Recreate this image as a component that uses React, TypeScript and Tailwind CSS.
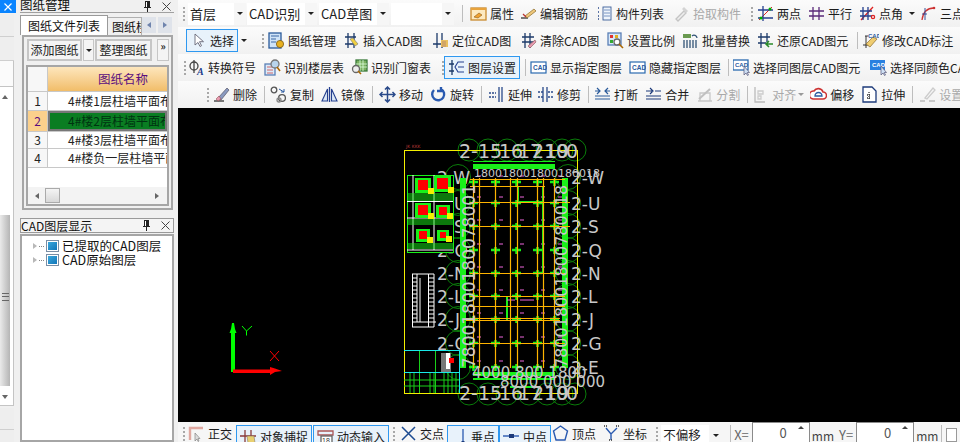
import React from "react";

const F = "font-['Noto_Sans_CJK_SC','Liberation_Sans',sans-serif]";
const S = (p: { children: React.ReactNode }) => (
  <svg width="17" height="17" viewBox="0 0 17 17" fill="none" strokeWidth="1.3" className="shrink-0">{p.children}</svg>
);
const navy = "#25408f";
const I: Record<string, React.ReactNode> = {
  props: <><rect x="1" y="3" width="15" height="12" fill="#fde9c0" stroke="#c98a2e" /><path d="M1 3h15v2H1z" fill="#e8a33c" /><path d="M4 12l5-4 3 2-4 3z" fill="#f0a030" stroke="#8a5a1a" strokeWidth=".6" /></>,
  edit: <><path d="M1 13h7" stroke="#333" /><path d="M5 11l9-7 2 2-9 7z" fill="#eec77a" stroke="#8a6a2a" strokeWidth=".7" /><path d="M3 9l3 3" stroke="#b33" /></>,
  list: <><path d="M2 3h2M2 7h2M2 11h2M2 14h2" stroke="#2a4a8a" strokeDasharray="1 1" /><rect x="7" y="2" width="8" height="13" fill="#eef4fb" stroke="#3c5f9a" strokeWidth=".9" /><path d="M8 5h6M8 8h6M8 11h6" stroke="#5a7fb5" strokeWidth=".8" /></>,
  pick: <><path d="M3 14l8-8 2 2-8 8z" fill="#eee" stroke="#c4c4c4" /><path d="M11 2l4 4-2 2-4-4z" fill="#d4d4d4" /></>,
  two: <><path d="M2 15L15 2" stroke="#d22" strokeWidth="1" /><path d="M1 5h15M1 13h15M6 1v15" stroke={navy} /><circle cx="4" cy="13" r="1.5" fill="#0a0" /><circle cx="13" cy="4" r="1.5" fill="#0a0" /></>,
  para: <path d="M1 6h15M1 11h15M5 2v13M11 2v13" stroke="#5a2a7a" />,
  angle: <><path d="M2 15L14 2" stroke="#d22" /><path d="M1 6h12M1 11h12M4 2v13M9 2v13" stroke={navy} /><circle cx="14" cy="12" r="1.6" stroke="#d22" /></>,
  three: <><path d="M2 15C3 7 7 3 14 3" stroke="#c33" /><path d="M2 9h5M5 3v12" stroke={navy} strokeWidth=".9" /><circle cx="14" cy="3" r="1.3" fill="#c33" /></>,
  sel: <path d="M5 2v11l3-2.500 2 4 1.500-.8-2-4h4z" fill="#fff" stroke="#667" strokeWidth=".9" />,
  paper: <><rect x="1" y="1" width="12" height="15" fill="#cfe3f7" stroke="#2a5a9a" /><path d="M3 4h8M3 7h5M3 10h5" stroke="#2a5a9a" strokeWidth=".9" /><circle cx="12" cy="12" r="3.6" fill="#e8b020" stroke="#7a5a10" strokeWidth=".8" /></>,
  ins: <><path d="M2 5h11M2 12h11M5 1v15M11 1v15" stroke="#1c3a6a" /><path d="M7 7l5 7 3-2-5-6z" fill="#efd040" stroke="#777" strokeWidth=".6" /></>,
  loc: <><path d="M1 12h11M5 1v15M10 1v15" stroke="#1c3a6a" /><path d="M9 8h7v7H9z" fill="#e9c060" /><path d="M11 9v6M13 9v6" stroke="#a77" strokeWidth=".7" /></>,
  clr: <><path d="M2 5h12M2 10h12M5 1v15M10 1v15" stroke="#1c3a6a" /><path d="M8 14l7-6 1 2-6 6z" fill="#e79ab0" stroke="#855" strokeWidth=".6" /></>,
  scale: <><rect x="1" y="1" width="13" height="12" fill="#d8e8f8" stroke="#5a7fb5" /><rect x="3" y="3" width="3" height="3" fill="#d33" /><rect x="8" y="3" width="3" height="3" fill="#e0b020" /><rect x="3" y="8" width="3" height="3" fill="#3a3" /><circle cx="10" cy="10" r="3" fill="#fff" stroke="#666" /><path d="M12 12l4 4" stroke="#a60" strokeWidth="1.6" /></>,
  batch: <><rect x="1" y="2" width="8" height="4" fill="#6a9a50" /><path d="M2 8v8M5 8v8M8 8v8M11 8v8M14 8v8" stroke="#357" /><path d="M10 4a3 3 0 0 1 5 2" stroke="#357" /></>,
  rest: <><path d="M1 5h12M1 11h8M4 1v15M10 1v9" stroke="#1c3a6a" /><path d="M16 12h-6m2-3l-3 3 3 3" stroke="#2a8a2a" strokeWidth="1.6" /></>,
  mod: <><path d="M1 13h6M3 4h3M4 4v12" stroke="#222" strokeWidth=".9" /><path d="M4 12l7-7 4 2-7 8z" fill="#efcc70" stroke="#8a6a2a" strokeWidth=".7" /><text x="6" y="6" fontSize="6" fontWeight="700" fill="#2a5aa0" fontFamily="Liberation Sans">CAD</text></>,
  conv: <><circle cx="6" cy="7" r="4" stroke="#444" /><path d="M6 1v13" stroke="#444" /><text x="9" y="16" fontSize="10" fontWeight="700" fontStyle="italic" fill="#1a3a8a" fontFamily="Liberation Serif">A</text></>,
  floor: <><rect x="1" y="5" width="10" height="11" fill="#dceaf8" stroke="#5a7fb5" /><path d="M3 8h6M3 11h6M3 14h6" stroke="#c44" strokeWidth=".8" /><circle cx="11" cy="5" r="4" fill="#b8d4ec" stroke="#777" /><path d="M13 8l3 4" stroke="#a60" strokeWidth="1.5" /></>,
  win: <><rect x="5" y="1" width="11" height="11" fill="#7ab060" stroke="#3a7a3a" /><path d="M9 1v11M12 1v11M5 5h11M5 8h11" stroke="#dfd" strokeWidth=".8" /><circle cx="5" cy="10" r="3.5" fill="#eee" stroke="#666" /><path d="M7 12l3 3" stroke="#a60" strokeWidth="1.6" /></>,
  layer: <><path d="M1 5h5M1 12h5M4 1v15" stroke="#1c3a6a" /><path d="M16 3H10L7 8l3 5h6M10 8h6" stroke={navy} strokeWidth="1.1" /></>,
  cadbox: <><rect x="1" y="3" width="15" height="11" fill="#fff" stroke="#2a6ab0" strokeWidth="1.2" /><text x="3" y="11" fontSize="6.5" fontWeight="700" fill="#2a5aa0" fontFamily="Liberation Sans">CAD</text></>,
  cadsel: <><rect x="0" y="1" width="15" height="10" fill="#fff" stroke="#2a6ab0" /><text x="2" y="8" fontSize="6" fontWeight="700" fill="#2a5aa0" fontFamily="Liberation Sans">CAD</text><path d="M11 7v9l2-2 1.500 2.500 1-.5-1.300-2.500h2.300z" fill="#cfe0f4" stroke="#557" strokeWidth=".7" /></>,
  cadsel2: <><rect x="0" y="1" width="15" height="10" fill="#2a80e0" /><text x="2" y="8" fontSize="6" fontWeight="700" fill="#fff" fontFamily="Liberation Sans">CAD</text><path d="M11 7v9l2-2 1.500 2.500 1-.5-1.300-2.500h2.300z" fill="#cfe0f4" stroke="#557" strokeWidth=".7" /></>,
  del: <><path d="M1 15h10" stroke="#333" /><path d="M5 12L14 2l2 2-8 10z" fill="#8a9ac0" stroke="#556" strokeWidth=".7" /><path d="M3 13l3-3 2 3-3 2z" fill="#e79ab0" stroke="#844" strokeWidth=".5" /></>,
  copy: <><circle cx="4" cy="4" r="2.800" stroke="#555" /><circle cx="12" cy="12" r="3.400" stroke="#555" /><circle cx="9" cy="14" r="2" stroke="#888" /><path d="M9 3l5 3m0-3v3h-3" stroke="#2a5aa0" strokeWidth="1" /></>,
  mirror: <><path d="M8.500 1v15" stroke={navy} /><path d="M6.500 3v12H1zM10.500 3v12H16z" stroke={navy} strokeWidth="1.1" fill="#dce8f6" /></>,
  move: <path d="M8.500 1v15M1 8.500h15M6 3.500l2.500-2.500 2.500 2.500M6 13.500l2.500 2.500 2.500-2.500M3.500 6L1 8.500l2.500 2.500M13.500 6l2.500 2.500-2.500 2.500" stroke="#2a4a8a" strokeWidth="1.500" />,
  rot: <path d="M4 4a6 6 0 1 0 7-1M11 1v4H7" stroke="#2a5ab0" strokeWidth="2.400" />,
  ext: <><path d="M1 7h7" stroke="#2a4a8a" strokeDasharray="2 1" /><path d="M1 11h7" stroke="#2a4a8a" strokeDasharray="2 1" /><path d="M11 1v15M14 1v15" stroke="#2a4a8a" /></>,
  trim: <><path d="M6 1v15M10 1v15" stroke="#2a4a8a" /><path d="M1 6h6M1 11h6M11 6h5M11 11h5" stroke="#2a4a8a" strokeDasharray="2 1" /></>,
  brk: <path d="M1 5h5M11 5h5M1 13h15M1 10h15M3 2l3 3-3 3M14 2l-3 3 3 3" stroke="#2a5a9a" strokeWidth="1.2" />,
  merge: <path d="M1 5h6M10 5h6M1 13h15M1 10h15M5 2l3 3-3 3" stroke="#1c3a7a" strokeWidth="1.2" />,
  split: <><path d="M2 15h14M4 15V7h10v8" stroke="#c8c8c8" /><path d="M3 13L14 3" stroke="#c0c0c0" strokeWidth="2" /></>,
  align: <><path d="M3 1v15h10" stroke="#bbb" /><path d="M6 5h5v3H6zM6 10h3v3H6z" stroke="#ccc" /></>,
  off: <><path d="M3 13a4 4 0 0 1 1-8 5 5 0 0 1 9 1 3.500 3.500 0 0 1 0 7z" fill="#fff" stroke="#c33" strokeWidth="1.6" /><path d="M5 10a3 3 0 0 1 7 0z" stroke="#2a5aa0" /></>,
  stretch: <><path d="M2 1h9l4 4v11H2z" fill="#fff" stroke="#1c3a7a" strokeWidth="1.3" /><path d="M8 6v8M6 9h4M6 12h4" stroke="#333" strokeDasharray="1 1" /></>,
  setg: <><path d="M1 15h5M10 15h6" stroke="#bbb" /><path d="M6 12l8-10 2 2-8 9z" stroke="#ccc" /></>,
  ortho: <><path d="M2 15V3h13" stroke="#e0a8a0" strokeWidth="2.400" /><path d="M7 8v8l2-2 1 2.500 1-.5-1-2.500h2z" fill="#ddd" stroke="#777" strokeWidth=".6" /></>,
  snap: <><path d="M0 8h16M5 2v14M11 2v14" stroke="#8a3a3a" /><path d="M7 8l7 0 1 7H8z" fill="#e9d070" stroke="#876" strokeWidth=".6" /></>,
  dyn: <><path d="M1 3h15v4H1z" stroke="#a55" /><rect x="4" y="8" width="11" height="8" fill="#fff" stroke="#666" /><text x="5" y="15" fontSize="7" fill="#333" fontFamily="Liberation Sans">18</text></>,
  cross: <path d="M2 2l13 13M15 2L2 15" stroke="#1c4a90" strokeWidth="1.5" />,
  perp: <><path d="M0 15h16" stroke="#2a5ab0" strokeWidth="1.400" /><path d="M12 1v14" stroke="#2a5ab0" /><rect x="10.500" y="13" width="3" height="3" fill="#1c3a7a" /></>,
  mid: <><path d="M0 8h16" stroke="#2a5ab0" strokeWidth="1.400" /><rect x="6" y="6" width="5" height="4" fill="#1c3a7a" /></>,
  vert: <path d="M8.500 1l7 5-2.500 9h-9L1.500 6z" stroke="#2a5ab0" strokeWidth="1.400" />,
  coord: <><path d="M3 3l5 6 6-6M8 9v6" stroke="#2a5ab0" strokeWidth="1.400" /><path d="M1 1h3M13 1h3M6 15h4" stroke="#333" strokeDasharray="1 1" /></>,
};

const Grip = () => (
  <div className="mx-[1px] flex h-[14px] w-[3px] shrink-0 flex-col justify-between">
    {[0, 1, 2, 3].map((i) => (
      <span key={i} className="h-[2px] w-[2px] bg-[#a8a8a8]" />
    ))}
  </div>
);
const Sep = ({ c = "mx-[4px]" }: { c?: string }) => <div className={`h-[17px] w-px shrink-0 bg-[#bdbdbd] ${c}`} />;
const Arrow = ({ c = "border-t-[#222]" }: { c?: string }) => (
  <span className={`block h-0 w-0 shrink-0 border-x-[3px] border-t-[3px] border-x-transparent ${c}`} />
);

type It = { i: string; t: string; w?: string; ml?: string; dim?: boolean; on?: boolean };
const Item = ({ i, t, w = "", ml = "ml-[7px]", dim, on }: It) => (
  <div
    className={`flex shrink-0 items-center gap-[3px] whitespace-nowrap ${ml} ${on ? "h-[23px] border border-[#2e98f0] bg-[#e8f2fb] px-[3px]" : ""} ${dim ? "text-[#a9a9a9]" : "text-[#1c1c1c]"}`}
  >
    <S>{I[i]}</S>
    <span className={w}>{t}</span>
  </div>
);
const Combo = ({ t, w, ml = "ml-[2px]" }: { t: string; w: string; ml?: string }) => (
  <div className={`flex h-[22px] shrink-0 items-center ${ml}`}>
    <div className={`flex h-full items-center whitespace-nowrap bg-white pl-[2px] text-[13px] text-[#222] ${w}`}>{t}</div>
    <div className="flex h-full w-[12px] items-center justify-center bg-[#f6f6f6]">
      <Arrow />
    </div>
  </div>
);
const Row = ({ children, c = "" }: { children: React.ReactNode; c?: string }) => (
  <div className={`flex h-[27px] w-[782px] shrink-0 items-center overflow-hidden bg-gradient-to-b from-[#fbfbfb] to-[#f1f1f1] text-[12px] leading-none ${c}`}>
    {children}
  </div>
);

const rows = [182, 203, 226, 250, 273, 296, 319, 343, 367];
const cols = [473, 495, 516, 537, 554];
const vlines = [473, 479, 495, 510, 517, 537, 543, 554];
const hl: [number, number, number][] = [
  [470, 565, 179], [470, 545, 186], [470, 570, 202], [470, 570, 226], [470, 565, 273],
  [470, 565, 296], [470, 565, 306], [466, 560, 318], [466, 560, 320], [470, 565, 343],
];
const rightLabels: [string, number][] = [["2-W", 184], ["2-U", 210], ["2-S", 233], ["2-Q", 257], ["2-N", 280], ["2-L", 303], ["2-J", 326], ["2-G", 350], ["2-E", 374]];
const topX = [459, 478, 497, 519, 537, 552];

const Detail = ({ x, y, s }: { x: number; y: number; s: number }) => (
  <g>
    <rect x={x - 3} y={y - 2} width={s + 6} height={s + 5} fill="#19f019" />
    <rect x={x} y={y} width={s} height={s} fill="#f00" />
    <rect x={x + s} y={y + s - 2} width={6} height={6} fill="#f4f000" />
  </g>
);

const Drawing = () => (
  <svg viewBox="178 108 782 314" width="782" height="314" className="block" style={{ fontFamily: "DejaVu Sans" }}>
    {rightLabels.map(([l, y]) => (
      <g key={l} fill="none" stroke="#0a7d0a" strokeWidth="1">
        <circle cx={568} cy={y - 7} r={12.500} />
        <circle cx={458} cy={y - 7} r={12.500} />
      </g>
    ))}
    {topX.concat(565).map((x) => (
      <g key={x} fill="none" stroke="#0a7d0a">
        <circle cx={x + 10} cy={150} r={11} />
        <circle cx={x + 10} cy={394} r={11} />
      </g>
    ))}
    <rect x="404.500" y="150.500" width="173" height="243" fill="none" stroke="#f4f000" />
    <text x="406" y="148" fontSize="4.500" fill="#a33">JK KKK</text>

    {/* left axis labels */}
    <g fill="#c8c8c8" fontSize="17">
      {rightLabels.slice(0, 8).map(([l, y]) => <text key={l} x={437} y={y}>{l}</text>)}
    </g>

    {/* left detail blocks */}
    <rect x="407.500" y="175.500" width="46" height="77" fill="#000" stroke="#19f019" />
    <path d="M413 175v75M434 175v75M407 218h46" stroke="#fff" strokeWidth="1" />
    <path d="M407 194h46M407 196h46M407 198h46M407 200h46M407 220h46M407 222h46M407 224h46M407 244h46M407 246h46M407 248h46" stroke="#19f019" />
    <path d="M407 201.500h46M407 250h46" stroke="#fff" />
    <Detail x={418} y={180} s={10} />
    <Detail x={437} y={178} s={11} />
    <Detail x={418} y={205} s={10} />
    <Detail x={439} y={207} s={8} />
    <Detail x={419} y={231} s={8} />
    <Detail x={440} y={232} s={6} />

    {/* stair */}
    <path d="M412.500 274v53M417 274v48M420 278v44M428.500 274v53M434 274v53M412 274h22M412 327h22M412 322h24" stroke="#fff" fill="none" />
    <path d="M412 278h5M412 282h5M412 286h5M412 290h5M412 294h5M412 298h5M412 302h5M412 306h5M412 310h5M412 314h5M412 318h5M428 278h6M428 282h6M428 286h6M428 290h6M428 294h6M428 298h6M428 302h6M428 306h6M428 310h6M428 314h6M428 318h6" stroke="#fff" />

    {/* lower-left box */}
    <rect x="441" y="353" width="10" height="19" fill="#777" />
    <rect x="446" y="353" width="4" height="16" fill="#fff" />
    <rect x="449" y="358" width="5" height="5" fill="#f00" />
    <path d="M419.500 350v43M435.500 350v43" stroke="#19d019" />
    <path d="M404 380h56M404 386h56M410 372v21M414 372v21M430 372v21M434 372v21M444 372v21M448 372v21M452 372v21M456 372v21" stroke="#19d019" />
    <path d="M404 350.500h56M404 372.500h56M459.500 350v43" stroke="#19e8e8" />

    {/* columns */}
    {rows.map((y) => cols.map((x) => (
      <g key={`${x}-${y}`}>
        <path d={`M${x - 4} ${y}h9M${x + 0.5} ${y - 3}v7`} stroke="#19f019" strokeWidth="2.500" />
        <path d={`M${x + 4} ${y - 6}h4`} stroke="#ee66dd" />
      </g>
    )))}

    {/* green structure */}
    <rect x="460" y="178" width="6" height="190" fill="#19f019" />
    <rect x="562" y="178" width="6" height="190" fill="#19f019" />
    <rect x="473" y="164" width="82" height="5" fill="#19f019" />
    <rect x="473" y="161" width="82" height="1" fill="#19f019" />
    <rect x="473" y="372" width="82" height="4" fill="#19f019" />
    <rect x="473" y="378" width="82" height="2" fill="#19f019" />
    <rect x="510" y="386" width="26" height="2" fill="#19f019" />
    <path d="M518 186v16h26M543 186v88M507 296v24" stroke="#19f019" strokeWidth="2" fill="none" />
    <path d="M507 300h8M520 300h14" stroke="#ee66dd" />

    {/* grid lines */}
    {vlines.map((x) => <path key={x} d={`M${x + 0.5} 178V368`} stroke="#ffb400" strokeWidth="1.200" />)}
    {hl.map(([a, b, y], i) => <path key={i} d={`M${a} ${y + 0.5}H${b}`} stroke="#ffb400" strokeWidth="1.200" />)}

    {/* dims */}
    <g fill="#c8c8c8" fontSize="17">
      <text transform="translate(475 368) rotate(-90)">78001800180078001</text>
      <text transform="translate(567 368) rotate(-90)" fontSize="16">780018001800780018</text>
      <text x="474" y="177" fontSize="11">180018001800180018</text>
      <text x="472" y="378" fontSize="15">4000 800 1800</text>
      <text x="500" y="387" fontSize="15">8000 000 000</text>
    </g>

    {/* labels */}
    <g fill="#c8c8c8" fontSize="17">
      {rightLabels.map(([l, y]) => <text key={l} x={571} y={y}>{l}</text>)}
    </g>
    <g fill="#c8c8c8" fontSize="19">
      {[158, 400].map((y) => (
        <g key={y}>
          <text x={459} y={y}>2-</text>
          <text x={478} y={y}>15</text>
          <text x={499} y={y}>16</text>
          <text x={518} y={y}>17</text>
          <text x={532} y={y}>21</text>
          <text x={545} y={y}>19</text>
          <text x={556} y={y}>0</text>
          <text x={566} y={y}>0</text>
        </g>
      ))}
    </g>

    {/* axes */}
    <path d="M231 372V333h-1.500l1.500-4 1-6h2l1 6 1.500 4H235v39z" fill="#00ff00" />
    <path d="M233 369.500h37V367l5 1.500 7 2.500-7 1-5 3v-2h-37z" fill="#ff0000" />
    <path d="M242 326l4.500 5 5.500-5M246.500 331v4.500" stroke="#00ff00" fill="none" />
    <path d="M270 351l9 10M279 351l-9 10" stroke="#ff0000" fill="none" />
  </svg>
);

const Spin = () => (
  <div className="relative ml-[3px] flex h-[20px] w-[58px] shrink-0 items-center justify-end self-end border-x border-t border-[#8a8a8a] bg-white pr-[22px] text-[13px] text-[#555]">
    0
    <span className="absolute right-[5px] top-[3px] h-0 w-0 border-x-[3px] border-b-[3px] border-x-transparent border-b-[#444]" />
  </div>
);

const Pin = () => (
  <svg width="9" height="11" viewBox="0 0 9 11" className="shrink-0">
    <path d="M2 0h5v6h1v1H5v4H4V7H1V6h1z" fill="#222" />
    <path d="M3 1h1v5H3z" fill="#fff" />
  </svg>
);
const Close = () => (
  <svg width="9" height="9" viewBox="0 0 9 9" className="shrink-0">
    <path d="M.5.5l8 8M8.500.5l-8 8" stroke="#444" />
  </svg>
);

const GridRow = ({ n, t, sel, h }: { n: string; t: string; sel?: boolean; h: string }) => (
  <div className={`flex ${h} shrink-0 border-b border-[#c8c8c8] text-[12px]`}>
    <div className={`flex w-[20px] shrink-0 items-center justify-center border-r border-[#c8c8c8] ${sel ? "bg-[#fbd08c] text-[#5a0f7f]" : "bg-[#f7f7f7] text-[#222]"}`}>{n}</div>
    <div className={`flex min-w-0 flex-1 items-center overflow-hidden whitespace-nowrap ${sel ? "border-2 border-[#777] bg-[#0a7d22] pl-[18px] text-[#031]" : "bg-white pl-[20px] text-[#222]"}`}>{t}</div>
  </div>
);

const LayerIcon = () => (
  <span className="flex h-[12px] w-[13px] shrink-0 items-center justify-center border border-[#7a8ea5] bg-white">
    <span className="h-[8px] w-[9px] bg-gradient-to-br from-[#3aa8dc] to-[#1276b8]" />
  </span>
);
const TreeRow = ({ t }: { t: string }) => (
  <div className="flex h-[14px] items-center whitespace-nowrap pl-[11px] text-[#111]">
    <span className="h-0 w-0 border-y-[3px] border-l-[4px] border-y-transparent border-l-[#b8b8b8]" />
    <span className="ml-[2px] mr-[2px] w-[5px] border-t border-dotted border-[#888]" />
    <LayerIcon />
    <span className="ml-[3px]">{t}</span>
  </div>
);

export default function App() {
  return (
    <div className={`flex h-[442px] w-[960px] overflow-hidden bg-[#f0f0f0] ${F}`}>
      {/* far left strip */}
      <div className="flex w-[16px] shrink-0 flex-col">
        <div className="flex h-[13px] shrink-0 items-center justify-center bg-[#0a84ff]">
          <svg width="8" height="8" viewBox="0 0 8 8"><path d="M.5.500l7 7M7.500.500l-7 7" stroke="#fff" strokeWidth="1.200" /></svg>
        </div>
        <div className="mt-[1px] h-[23px] w-[14px] shrink-0 border-b border-[#cfcfcf] bg-[#eeeeee]" />
        <div className="h-[24px] w-[14px] shrink-0 border-b border-[#cfcfcf] bg-[#eeeeee]" />
        <div className="relative flex h-[345px] w-[14px] shrink-0 flex-col border-b border-r border-[#c4c4c4] bg-white">
          <div className="h-[26px] shrink-0 border-b border-[#c4c4c4] bg-[#fbfbfb]" />
          <span className="absolute left-[2px] top-[34px] h-0 w-0 border-x-[3px] border-b-[4px] border-x-transparent border-b-[#666]" />
          <div className="h-[128px] shrink-0" />
          <div className="relative h-[171px] w-[10px] shrink-0 bg-gradient-to-r from-[#eaeaea] to-[#b5b5b5]">
            <span className="absolute left-[2px] top-[78px] h-[8px] w-[7px] border-y border-[#666] before:absolute before:top-[2px] before:h-px before:w-full before:bg-[#666]" />
          </div>
          <span className="absolute left-[2px] bottom-[6px] h-0 w-0 border-x-[3px] border-t-[4px] border-x-transparent border-t-[#666]" />
        </div>
        <div className="mt-[2px] h-[22px] w-[14px] shrink-0 border-b border-[#cfcfcf] bg-[#eeeeee]" />
        <div className="h-[12px] w-[14px] shrink-0 bg-[#eeeeee]" />
      </div>

      {/* dock panels */}
      <div className="flex w-[162px] shrink-0 flex-col pl-[4px] pr-[4px]">
        <div className="flex h-[13px] shrink-0 items-center overflow-hidden border-b border-[#a0a0a0] pr-[5px] text-[12.500px] leading-none text-[#111]">
          <span className="-mt-[1px] whitespace-nowrap">图纸管理</span>
          <span className="ml-[73px] flex items-center gap-[10px]"><Pin /><Close /></span>
        </div>
        <div className="relative mt-[2px] flex h-[20px] shrink-0 items-end text-[12px] leading-none text-[#111]">
          <div className="z-10 flex h-[20px] w-[88px] items-center justify-center border-x border-t border-[#9a9a9a] bg-white">图纸文件列表</div>
          <div className="flex h-[18px] w-[34px] items-center overflow-hidden border-r border-t border-[#b0b0b0] bg-[#f0f0f0] pl-[4px] whitespace-nowrap">图纸楼层</div>
          <div className="absolute right-[2px] top-[2px] flex gap-[2px]">
            {[0, 1].map((k) => (
              <div key={k} className="flex h-[16px] w-[14px] items-center justify-center bg-[#dfe3ea]">
                <span className={`h-0 w-0 border-y-[3px] border-y-transparent ${k ? "border-l-[4px] border-l-[#6f84ad]" : "border-r-[4px] border-r-[#6f84ad]"}`} />
              </div>
            ))}
          </div>
        </div>
        <div className="ml-[2px] mr-[1px] flex h-[175px] shrink-0 flex-col border-2 border-[#a6a6a6] bg-[#f0f0f0] px-[2px]">
          <div className="flex h-[23px] shrink-0 items-center gap-[1px] pl-[1px] pt-[3px]">
            <div className="flex h-[22px] w-[56px] items-center justify-center border-2 border-[#c6c6c6] bg-[#f4f4f4] text-[12px] leading-none text-[#222]">添加图纸</div>
            <div className="flex h-[22px] w-[11px] items-center justify-center border border-[#c6c6c6] bg-[#f4f4f4]"><Arrow /></div>
            <div className="flex h-[22px] w-[58px] items-center justify-center border-2 border-[#c6c6c6] bg-[#f4f4f4] text-[12px] leading-none text-[#222]">整理图纸</div>
            <div className="ml-[4px] flex h-[22px] w-[12px] items-start justify-center border border-[#c6c6c6] bg-[#f4f4f4] text-[10px] font-bold leading-[12px] text-[#222]">»</div>
          </div>
          <div className="mb-[2px] mt-[5px] flex min-h-0 flex-1 flex-col border-2 border-[#a6a6a6] bg-white">
            <div className="flex h-[25px] shrink-0 border-b border-[#c8c8c8]">
              <div className="w-[20px] shrink-0 border-r border-[#c8c8c8] bg-[#f7f7f7]" />
              <div className="flex flex-1 items-center justify-center bg-gradient-to-b from-[#fde6bc] to-[#f1bd68] pl-[31px] text-[12.500px] text-[#5a0f7f]">图纸名称</div>
            </div>
            <GridRow n="1" t="4#楼1层柱墙平面布" h="h-[19px]" />
            <GridRow n="2" t="4#楼2层柱墙平面布" sel h="h-[21px]" />
            <GridRow n="3" t="4#楼3层柱墙平面布" h="h-[17px]" />
            <GridRow n="4" t="4#楼负一层柱墙平面" h="h-[19px]" />
            <div className="min-h-0 flex-1" />
            <div className="flex h-[17px] shrink-0 items-center bg-[#f3f3f3]">
              <span className="ml-[7px] h-0 w-0 border-y-[3px] border-r-[4px] border-y-transparent border-r-[#666]" />
              <div className="ml-[6px] h-[15px] w-[15px] border border-[#aaa] bg-gradient-to-b from-[#f4f4f4] to-[#d8d8d8]" />
              <div className="flex-1" />
              <span className="mr-[8px] h-0 w-0 border-y-[3px] border-l-[4px] border-y-transparent border-l-[#666]" />
            </div>
          </div>
        </div>
        <div className="mt-[8px] flex h-[15px] shrink-0 items-center border border-[#9a9a9a] bg-[#f4f4f4] pr-[5px] text-[12px] leading-none text-[#111]">
          <span className="whitespace-nowrap">CAD图层显示</span>
          <span className="ml-[50px] flex items-center gap-[10px]"><Pin /><Close /></span>
        </div>
        <div className="mt-[1px] flex min-h-0 flex-1 flex-col border-2 border-[#a6a6a6] bg-white pt-[3px] text-[12.500px] leading-none">
          <TreeRow t="已提取的CAD图层" />
          <TreeRow t="CAD原始图层" />
        </div>
      </div>

      {/* main */}
      <div className="flex w-[782px] shrink-0 flex-col">
        <Row>
          <div className="ml-[4px]"><Grip /></div>
          <Combo t="首层" w="w-[46px]" ml="ml-[1px]" />
          <Combo t="CAD识别" w="w-[58px]" ml="ml-[1px]" />
          <Combo t="CAD草图" w="w-[58px]" />
          <Combo t="" w="w-[51px]" />
          <Sep c="ml-[8px]" />
          <Item i="props" t="属性" ml="ml-[7px]" />
          <Item i="edit" t="编辑钢筋" ml="ml-[6px]" />
          <Item i="list" t="构件列表" ml="ml-[8px]" />
          <Item i="pick" t="拾取构件" dim ml="ml-[9px]" />
          <div className="ml-[9px]"><Grip /></div>
          <Item i="two" t="两点" ml="ml-[2px]" />
          <Item i="para" t="平行" />
          <Item i="angle" t="点角" />
          <span className="ml-[6px] flex"><Arrow /></span>
          <Item i="three" t="三点" ml="ml-[5px]" />
        </Row>
        <Row>
          <div className="ml-[7px]"><Grip /></div>
          <Item i="sel" t="选择" on ml="-ml-[4px]" />
          <span className="ml-[3px] flex"><Arrow /></span>
          <div className="ml-[14px]"><Grip /></div>
          <Item i="paper" t="图纸管理" ml="ml-[2px]" />
          <Item i="ins" t="插入CAD图" w="w-[62px]" />
          <Item i="loc" t="定位CAD图" w="w-[61px]" />
          <Item i="clr" t="清除CAD图" w="w-[61px]" />
          <Item i="scale" t="设置比例" ml="ml-[6px]" />
          <Item i="batch" t="批量替换" />
          <Item i="rest" t="还原CAD图元" w="w-[74px]" />
          <Sep c="ml-[6px]" />
          <Item i="mod" t="修改CAD标注" ml="ml-[4px]" w="w-[74px]" />
        </Row>
        <Row>
          <div className="ml-[5px]"><Grip /></div>
          <Item i="conv" t="转换符号" ml="ml-[0px]" />
          <Item i="floor" t="识别楼层表" ml="ml-[8px]" />
          <Item i="win" t="识别门窗表" />
          <div className="ml-[10px]"><Grip /></div>
          <Item i="layer" t="图层设置" on ml="-ml-[2px]" />
          <Sep c="ml-[5px]" />
          <Item i="cadbox" t="显示指定图层" ml="ml-[4px]" />
          <Item i="cadbox" t="隐藏指定图层" />
          <Sep c="ml-[7px]" />
          <Item i="cadsel" t="选择同图层CAD图元" ml="ml-[4px]" w="w-[109px]" />
          <Item i="cadsel2" t="选择同颜色CAD图元" ml="ml-[8px]" />
        </Row>
        <Row>
          <div className="ml-[28px]"><Grip /></div>
          <Item i="del" t="删除" ml="ml-[2px]" />
          <Sep c="ml-[7px]" />
          <Item i="copy" t="复制" ml="ml-[5px]" />
          <Item i="mirror" t="镜像" />
          <Sep c="ml-[7px]" />
          <Item i="move" t="移动" ml="ml-[6px]" />
          <Item i="rot" t="旋转" />
          <Sep c="ml-[7px]" />
          <Item i="ext" t="延伸" ml="ml-[6px]" />
          <Item i="trim" t="修剪" ml="ml-[5px]" />
          <Sep c="ml-[7px]" />
          <Item i="brk" t="打断" ml="ml-[5px]" />
          <Item i="merge" t="合并" />
          <Item i="split" t="分割" dim />
          <Sep c="ml-[7px]" />
          <Item i="align" t="对齐" dim ml="ml-[4px]" />
          <span className="ml-[2px] flex"><Arrow c="border-t-[#999]" /></span>
          <Item i="off" t="偏移" ml="ml-[6px]" />
          <Item i="stretch" t="拉伸" />
          <Sep c="ml-[7px]" />
          <Item i="setg" t="设置" dim ml="ml-[6px]" />
        </Row>
        <div className="h-[314px] w-[782px] shrink-0 bg-black">
          <Drawing />
        </div>
        <div className="flex h-[20px] w-[782px] shrink-0 items-start overflow-hidden bg-[#f6f6f6] pt-[3px] text-[12px] leading-none text-[#1c1c1c]">
          <div className="ml-[4px] mt-[2px]"><Grip /></div>
          <Item i="ortho" t="正交" ml="ml-[1px]" />
          <Item i="snap" t="对象捕捉" on ml="ml-[4px]" />
          <Item i="dyn" t="动态输入" on ml="ml-[1px]" />
          <div className="ml-[3px] mt-[2px]"><Grip /></div>
          <Item i="cross" t="交点" ml="ml-[3px]" />
          <Item i="perp" t="垂点" on ml="ml-[3px]" />
          <Item i="mid" t="中点" on ml="ml-[0px]" />
          <Item i="vert" t="顶点" ml="ml-[1px]" />
          <Item i="coord" t="坐标" />
          <div className="ml-[8px] mt-[2px]"><Grip /></div>
          <div className="ml-[1px] flex h-[20px] w-[48px] items-center whitespace-nowrap bg-white pl-[2px] text-[12.500px]">不偏移</div>
          <div className="flex h-[20px] w-[14px] items-center justify-center"><Arrow /></div>
          <Sep c="ml-[7px]" />
          <span className="ml-[3px] mt-[3px] text-[13px] text-[#666]">X=</span>
          <Spin />
          <span className="ml-[2px] mt-[5px] text-[12px] text-[#444]">mm</span>
          <span className="ml-[5px] mt-[3px] text-[13px] text-[#666]">Y=</span>
          <Spin />
          <span className="ml-[2px] mt-[5px] text-[12px] text-[#444]">mm</span>
          <Sep c="ml-[3px]" />
          <div className="ml-[4px] mt-[3px] h-[14px] w-[11px] border border-[#999] bg-white" />
        </div>
      </div>
    </div>
  );
}
